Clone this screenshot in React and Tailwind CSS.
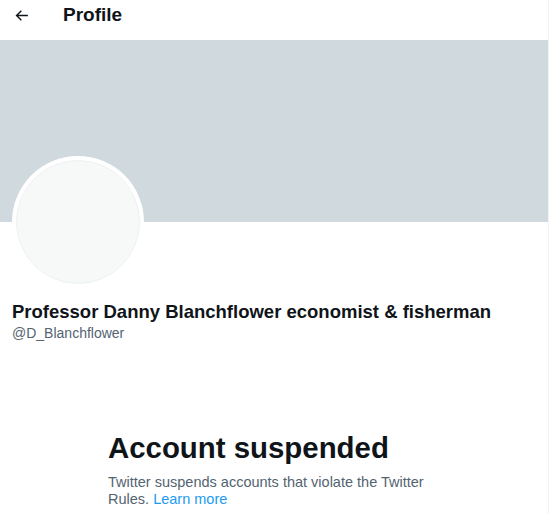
export default function App() {
    return (
        <main className="w-[550px] h-[514px] overflow-hidden bg-white font-['Liberation_Sans',sans-serif] text-[#0f1419]">
            <div className="w-[549px] h-full border-r border-[#eff3f4]">
                <div className="flex items-center h-[40px] px-[13px]">
                    <svg viewBox="0 0 24 24" className="w-[17px] h-[17px] fill-[#0f1419] -mt-[10px]">
                        <path d="M7.414 13l5.043 5.04-1.414 1.42L3.586 12l7.457-7.46 1.414 1.42L7.414 11H21v2H7.414z" />
                    </svg>
                    <div className="ml-[33px] -mt-[12px] text-[19px] font-bold leading-none">Profile</div>
                </div>
                <div className="h-[182px] bg-[#cfd9de]" />
                <div className="px-[12px]">
                    <div className="-mt-[66px] w-[132px] h-[132px] rounded-full bg-white p-[4px]">
                        <div className="w-full h-full rounded-full bg-[#f7f9f9] border border-[#eef1f2]" />
                    </div>
                    <div className="mt-[13px] text-[18.5px] font-bold leading-[22px]">Professor Danny Blanchflower economist &amp; fisherman</div>
                    <div className="text-[14px] leading-[20px] text-[#536471]">@D_Blanchflower</div>
                </div>
                <div className="mt-[88px] pl-[108px] pr-[100px]">
                    <div className="text-[29.4px] font-bold leading-[34px]">Account suspended</div>
                    <div className="mt-[9px] text-[14.5px] leading-[17px] text-[#536471]">
                        Twitter suspends accounts that violate the Twitter Rules. <span className="text-[#1d9bf0]">Learn more</span>
                    </div>
                </div>
            </div>
        </main>
    );
}
